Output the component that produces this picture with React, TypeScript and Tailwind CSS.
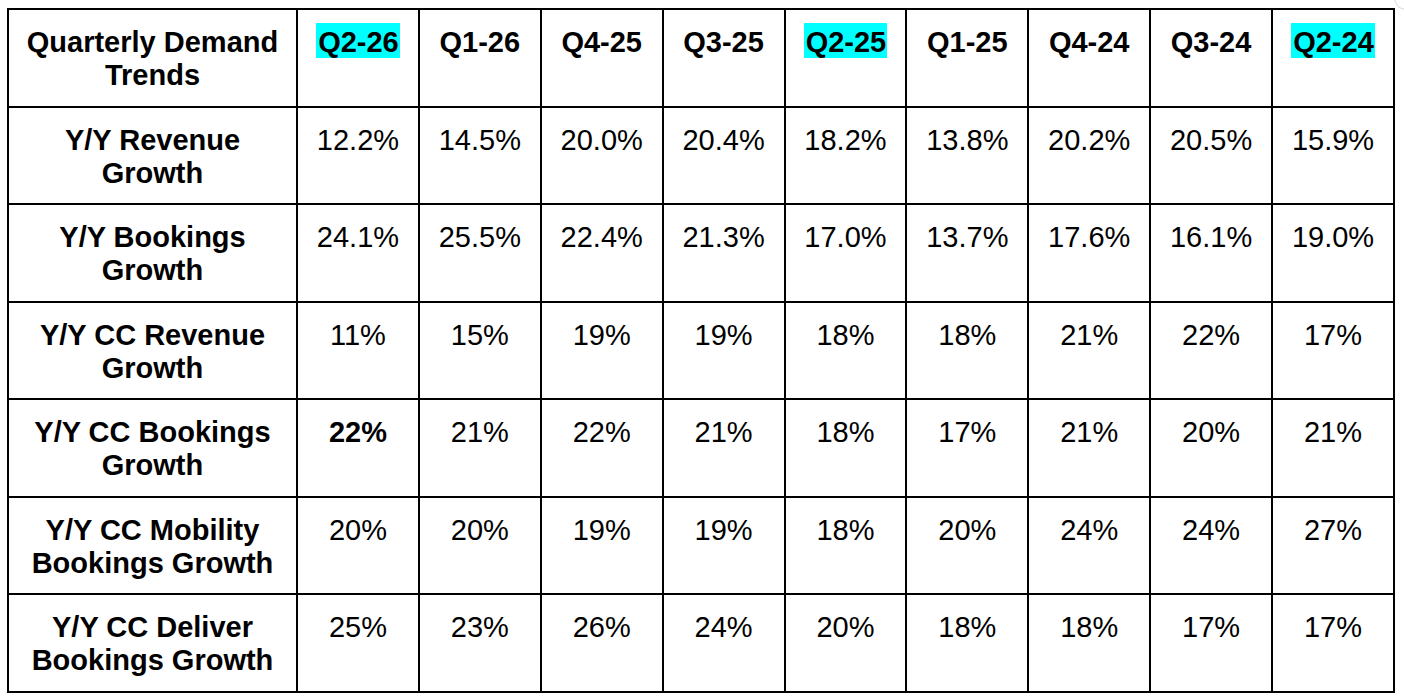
const quarters = ["Q2-26", "Q1-26", "Q4-25", "Q3-25", "Q2-25", "Q1-25", "Q4-24", "Q3-24", "Q2-24"];
const highlighted = ["Q2-26", "Q2-25", "Q2-24"];

interface Row {
  label: [string, string];
  values: string[];
  boldFirst?: boolean;
}

const rows: Row[] = [
  { label: ["Y/Y Revenue", "Growth"], values: ["12.2%", "14.5%", "20.0%", "20.4%", "18.2%", "13.8%", "20.2%", "20.5%", "15.9%"] },
  { label: ["Y/Y Bookings", "Growth"], values: ["24.1%", "25.5%", "22.4%", "21.3%", "17.0%", "13.7%", "17.6%", "16.1%", "19.0%"] },
  { label: ["Y/Y CC Revenue", "Growth"], values: ["11%", "15%", "19%", "19%", "18%", "18%", "21%", "22%", "17%"] },
  { label: ["Y/Y CC Bookings", "Growth"], values: ["22%", "21%", "22%", "21%", "18%", "17%", "21%", "20%", "21%"], boldFirst: true },
  { label: ["Y/Y CC Mobility", "Bookings Growth"], values: ["20%", "20%", "19%", "19%", "18%", "20%", "24%", "24%", "27%"] },
  { label: ["Y/Y CC Deliver", "Bookings Growth"], values: ["25%", "23%", "26%", "24%", "20%", "18%", "18%", "17%", "17%"] },
];

const cell = "border-2 border-black align-top text-center pt-[16px] px-1";

export default function App() {
  return (
    <div className="relative w-[1404px] h-[700px] bg-white overflow-hidden text-black [font-family:'Liberation_Sans',Arial,sans-serif] text-[29px] leading-[33px]">
      {/* faint circle peeking in at the top right */}
      <div className="absolute left-[1394px] -top-[14px] w-[24px] h-[24px] rounded-full border border-gray-300" />

      <div className="pl-[7px] pt-[8px]">
        <table className="table-fixed border-collapse w-[1388px] h-[683px]">
          <colgroup>
            <col className="w-[289px]" />
            {quarters.map((q) => (
              <col key={q} />
            ))}
          </colgroup>
          <tbody>
            <tr className="h-[97.5px]">
              <td className={`${cell} font-bold`}>
                Quarterly Demand
                <br />
                Trends
              </td>
              {quarters.map((q) => (
                <td key={q} className={`${cell} font-bold`}>
                  {highlighted.includes(q) ? (
                    <span className="bg-[#00ffff] pt-[3px] pl-[2px] pr-[1px]">{q}</span>
                  ) : (
                    q
                  )}
                </td>
              ))}
            </tr>
            {rows.map((row) => (
              <tr key={row.label.join(" ")} className="h-[97.5px]">
                <td className={`${cell} font-bold`}>
                  {row.label[0]}
                  <br />
                  {row.label[1]}
                </td>
                {row.values.map((v, i) => (
                  <td key={i} className={`${cell} ${row.boldFirst && i === 0 ? "font-bold" : "font-normal"}`}>
                    {v}
                  </td>
                ))}
              </tr>
            ))}
          </tbody>
        </table>
      </div>
    </div>
  );
}
